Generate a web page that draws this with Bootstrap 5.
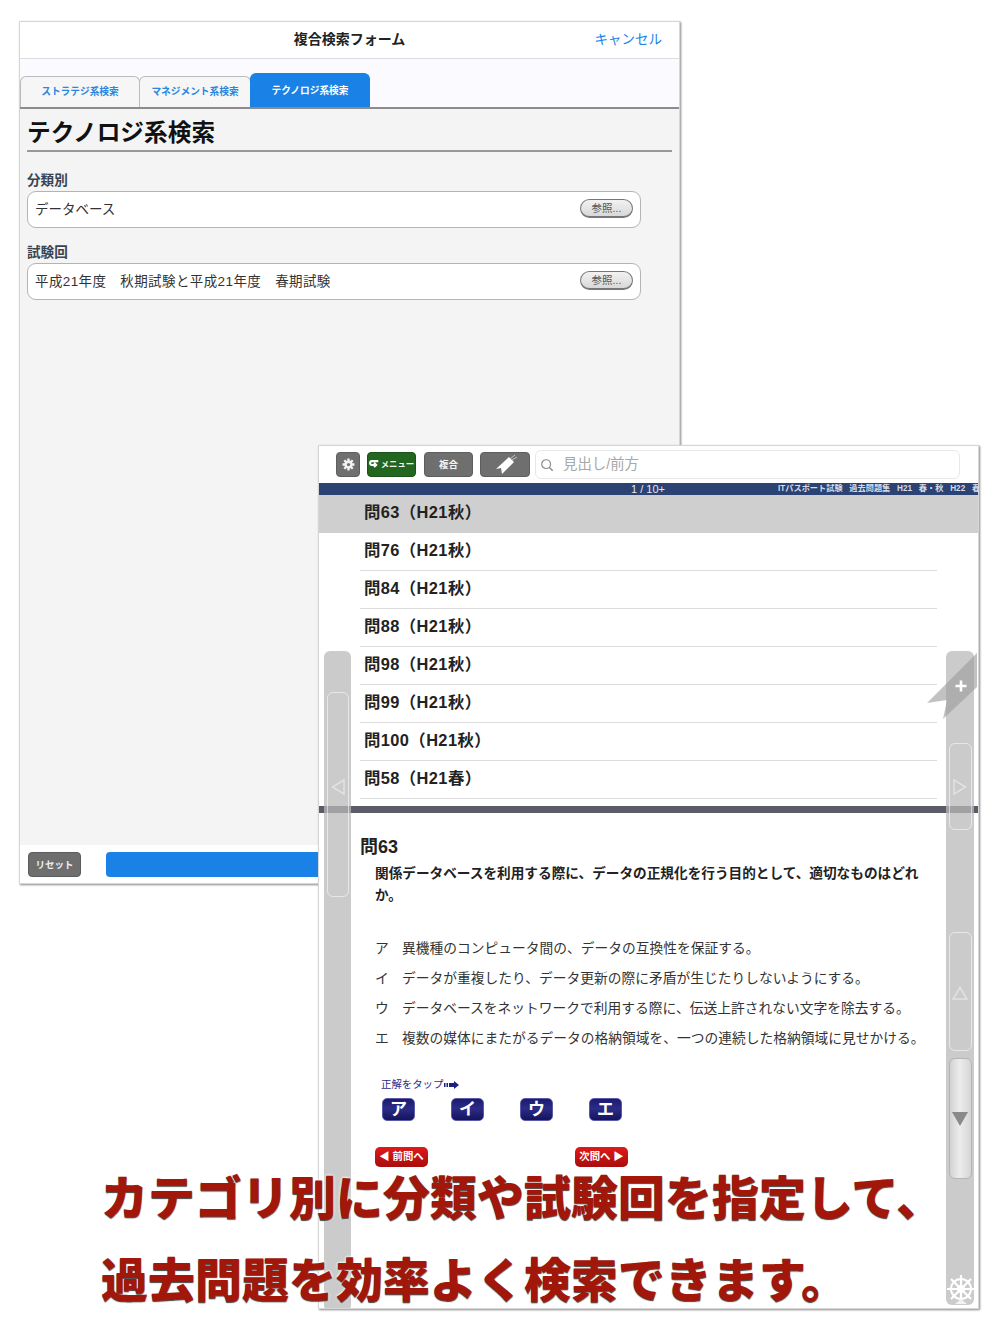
<!DOCTYPE html>
<html lang="ja">
<head>
<meta charset="utf-8">
<title>複合検索</title>
<link href="https://cdn.jsdelivr.net/npm/bootstrap@5.3.0/dist/css/bootstrap.min.css" rel="stylesheet">
<style>
html,body{margin:0;background:#fff;height:1334px;overflow:hidden}
body{font-family:"Liberation Sans","Noto Sans CJK JP",sans-serif;color:#222;position:relative;width:1000px}
.winbox{position:absolute;width:661px;background:#fff;border:1px solid #d6d6d6;box-shadow:1px 1px 2px #8a8a8a;overflow:hidden}
.win-a{left:19px;top:21px;height:863px;background:#f4f4f4}
.win-b{left:318px;top:445px;height:864px}
.titlebar{height:37px;background:#fff;border-bottom:1px solid #ddd;font-size:14px}
.titletext{font-weight:700;color:#222;left:0;right:0;top:7px}
.cancel{right:17px;top:8px;color:#1a82e6;text-decoration:none;font-size:13.5px}
.tabstrip{height:50px;background:#fafaff;border-bottom:2px solid #8c8c8c;align-items:flex-end}
.tabstrip .tabitem{width:120px;height:31px;background:#f6f6f6;border:1px solid #bbb;border-bottom:0;border-radius:6px 6px 0 0;font-size:9.7px;font-weight:700;color:#2a86e0;text-align:center;line-height:29px;padding:0;text-decoration:none}
.tabstrip .tabitem+.tabitem{width:112px;margin-left:-1px}
.tabstrip .tabon{width:120px!important;height:34px;background:#1a82e6;border-color:#1a82e6;color:#fff;line-height:33px}
.pagehead{font-size:23.7px;font-weight:700;color:#111;margin:9px 7px 0;padding-bottom:2px;border-bottom:2px solid #999;line-height:30px}
.fieldname{font-size:13.6px;font-weight:700;color:#3a4450;margin:20px 0 1px 7px;line-height:18px}
.fieldrow+.fieldname{margin-top:16px}
.fieldrow{width:614px;height:37px;margin-left:7px;background:#fff;border:1px solid #b4b4b4;border-radius:9px;padding:2px 7px 0;font-size:13.5px;color:#333}
.widetext{letter-spacing:.4px}
.browsebtn{width:53px;height:19px;padding:0;font-size:10.5px;line-height:16px;color:#555;background:linear-gradient(#f2f2f2,#d8d8d8);border:1px solid #777;border-bottom-width:2px;border-radius:10px;margin-top:-5px}
.footbar{height:38px;background:#fff;padding:7px 8px 6px}
.resetbtn{width:53px;height:25px;padding:0;font-size:9.5px;font-weight:700;line-height:23px;color:#eee;background:#6e6e6e;border:1px solid #5c5c5c;border-radius:4px}
.gobtn{height:25px;margin-left:25px;background:#1a82e6;border:0;border-radius:4px}
.toolbar{height:37px;padding:6px 18px 4px 17px;background:#fff;gap:7px}
.toolbtn{height:25px;padding:0;background:#6f6f6f;border:1px solid #5e5e5e;border-radius:4px;color:#f4f4f4;font-size:9.5px;font-weight:700;line-height:1;width:49px}
.toolbtn.gear{width:24px}
.toolbtn.menu{background:#23661f;border-color:#1d521a;font-size:8.4px;white-space:nowrap;gap:1px}
.toolbtn.mixed{margin-left:1px}
.toolbtn.tagged{width:50px}
.searchbox{height:29px;margin-top:-2px;border:1px solid #e8e8e8;border-radius:6px;font-size:14.4px;color:#a8a8a8;padding-left:4px;gap:9px;margin-left:-2px}
.statusbar{height:12px;background:#2b4272;color:#e4e8f0;position:relative;overflow:hidden;font-size:11px;line-height:12px}
.pagecount{left:312px;top:0;position:absolute}
.banner{left:459px;top:0;position:absolute;white-space:nowrap;font-size:8.2px;font-weight:700;color:#d6dbe6;word-spacing:4.5px}
.qlist{height:311px;border-radius:0}
.qlist .qitem{height:38px;margin-left:41px;margin-right:41px;padding:0 0 0 4px;border:0;border-bottom:1px solid #dcdcdc;border-radius:0;font-size:16.4px;font-weight:700;line-height:34px;letter-spacing:.4px;color:#222;background:transparent}
.qlist .qsel{margin:0;padding-left:45px;background:#cfcfcf;border-bottom:0}
.splitter{height:7px;background:#5c5c68}
.qarea{padding:24px 50px 0 41px}
.qtitle{font-size:18px;font-weight:700;line-height:20px;color:#222}
.qbody{font-size:13.65px;font-weight:700;line-height:22px;margin:6px 0 0 15px;color:#222}
.choices{margin:27px 0 0 15px;font-size:13.75px;line-height:30px;color:#333;list-style:none;padding:0}
.choices li{display:flex}
.choices b{font-weight:400;width:27px;flex:none}
.hintline{font-size:10.4px;color:#2a2a8c;margin:24px 0 0 21px;line-height:14px;gap:1px}
.answers{margin:6px 0 0 22px}
.answerbtn{width:33px;height:23px;padding:0;border:1px solid #5a5aa8;border-radius:5px;background:linear-gradient(#1a1a6e 0,#2c2c88 45%,#14145c 100%);color:#fff;font-size:17px;font-weight:700;line-height:20px;margin-right:36px}
.navrow{margin:26px 0 0 15px;width:253px}
.navbtn{width:53px;height:20px;padding:0;border:0;border-radius:5px;background:linear-gradient(#e01a1a,#a80c0c);color:#fff;font-size:10.4px;font-weight:700;line-height:20px}
.rail{position:absolute;background:rgba(185,185,185,.74);border-radius:6px}
.rail-l{left:5px;top:205px;width:27px;height:660px}
.rail-r{left:627px;top:205px;width:28px;height:654px}
.railcell{position:absolute;left:3px;width:23px;border:1px solid rgba(255,255,255,.55);border-radius:6px}
.rail-l .railcell{width:22px}
.railgrip{background:linear-gradient(90deg,#d2d2d2,#ececec 45%,#d6d6d6);border-color:#b4b4b4}
.railmark{position:absolute;left:0;right:0;margin:auto;display:block}
.ribbon{position:absolute;left:608px;top:207px}
.wheel{position:absolute;left:627px;top:827px}
.caption{position:absolute;left:101px;top:1154px;font-family:"Noto Sans CJK JP",sans-serif;font-size:47px;font-weight:900;line-height:82px;color:#a3170b;white-space:nowrap;text-shadow:0 1px 1px #444,0 0 3px #fff,0 0 3px #fff}
</style>
</head>
<body>

<section class="winbox win-a d-flex flex-column">
  <header class="titlebar position-relative flex-shrink-0">
    <div class="titletext position-absolute text-center">複合検索フォーム</div>
    <a class="cancel position-absolute" href="#">キャンセル</a>
  </header>
  <nav class="nav tabstrip flex-shrink-0">
    <a class="nav-link tabitem" href="#">ストラテジ系検索</a>
    <a class="nav-link tabitem" href="#">マネジメント系検索</a>
    <a class="nav-link tabitem tabon" href="#">テクノロジ系検索</a>
  </nav>
  <main class="flex-grow-1">
    <h1 class="pagehead">テクノロジ系検索</h1>
    <div class="fieldname">分類別</div>
    <div class="fieldrow d-flex align-items-center justify-content-between"><span>データベース</span><button class="btn browsebtn" type="button">参照...</button></div>
    <div class="fieldname">試験回</div>
    <div class="fieldrow d-flex align-items-center justify-content-between"><span class="widetext">平成21年度　秋期試験と平成21年度　春期試験</span><button class="btn browsebtn" type="button">参照...</button></div>
  </main>
  <footer class="footbar d-flex flex-shrink-0">
    <button class="btn resetbtn flex-shrink-0" type="button">リセット</button>
    <button class="btn gobtn flex-grow-1" type="button" aria-label="検索"></button>
  </footer>
</section>

<section class="winbox win-b">
  <div class="toolbar d-flex">
    <button class="btn toolbtn gear d-flex align-items-center justify-content-center flex-shrink-0" type="button" aria-label="設定">
      <svg width="13" height="13" viewBox="0 0 24 24"><g stroke="#f2f2f2" stroke-width="4.4"><path d="M12 1v22M1 12h22M4.2 4.2l15.6 15.6M19.800 4.200 4.200 19.800"/></g><circle cx="12" cy="12" r="7.500" fill="#f2f2f2"/><circle cx="12" cy="12" r="3" fill="#6f6f6f"/></svg>
    </button>
    <button class="btn toolbtn menu d-flex align-items-center justify-content-center flex-shrink-0" type="button">
      <svg width="11" height="11" viewBox="0 0 13 11" class="flex-shrink-0"><path d="M11 1.500H3.500a2 2 0 0 0 0 4.500H8M6 3.500 8.500 6 6 8.500" fill="none" stroke="#fff" stroke-width="2.400"/></svg><span>メニュー</span>
    </button>
    <button class="btn toolbtn mixed flex-shrink-0" type="button">複合</button>
    <button class="btn toolbtn tagged d-flex align-items-center justify-content-center flex-shrink-0" type="button" aria-label="しおり">
      <svg width="26" height="22" viewBox="0 0 26 22"><path d="M17 3 22 8 10 20 9 14 4 15Z" fill="#fff"/><path d="M18 5 23 1M20 6 25 3" stroke="#ddd" stroke-width=".8"/></svg>
    </button>
    <div class="searchbox d-flex align-items-center flex-grow-1">
      <svg width="14" height="14" viewBox="0 0 16 16" class="flex-shrink-0"><circle cx="7" cy="7" r="5" fill="none" stroke="#8c8c8c" stroke-width="1.400"/><path d="m10.500 10.500 4 4" stroke="#8c8c8c" stroke-width="1.600"/></svg>
      <span>見出し/前方</span>
    </div>
  </div>
  <div class="statusbar">
    <span class="pagecount">1 / 10+</span>
    <span class="banner">ITパスポート試験 過去問題集 H21 春・秋 H22 春</span>
  </div>
  <ul class="list-group qlist">
    <li class="list-group-item qitem qsel">問63（H21秋）</li>
    <li class="list-group-item qitem">問76（H21秋）</li>
    <li class="list-group-item qitem">問84（H21秋）</li>
    <li class="list-group-item qitem">問88（H21秋）</li>
    <li class="list-group-item qitem">問98（H21秋）</li>
    <li class="list-group-item qitem">問99（H21秋）</li>
    <li class="list-group-item qitem">問100（H21秋）</li>
    <li class="list-group-item qitem">問58（H21春）</li>
  </ul>
  <div class="splitter"></div>
  <div class="qarea">
    <div class="qtitle">問63</div>
    <p class="qbody">関係データベースを利用する際に、データの正規化を行う目的として、適切なものはどれか。</p>
    <ul class="choices">
      <li><b>ア</b><span>異機種のコンピュータ間の、データの互換性を保証する。</span></li>
      <li><b>イ</b><span>データが重複したり、データ更新の際に矛盾が生じたりしないようにする。</span></li>
      <li><b>ウ</b><span>データベースをネットワークで利用する際に、伝送上許されない文字を除去する。</span></li>
      <li><b>エ</b><span>複数の媒体にまたがるデータの格納領域を、一つの連続した格納領域に見せかける。</span></li>
    </ul>
    <div class="hintline d-flex align-items-center">正解をタップ
      <svg width="15" height="8" viewBox="0 0 15 8"><path d="M0 2h1.500v4H0zM2.500 2h1.500v4H2.500zM5 2h5V0l5 4-5 4V6H5z" fill="#1e1e86"/></svg>
    </div>
    <div class="answers d-flex">
      <button class="btn answerbtn" type="button">ア</button>
      <button class="btn answerbtn" type="button">イ</button>
      <button class="btn answerbtn" type="button">ウ</button>
      <button class="btn answerbtn" type="button">エ</button>
    </div>
    <div class="navrow d-flex justify-content-between">
      <button class="btn navbtn" type="button">◀ 前問へ</button>
      <button class="btn navbtn" type="button">次問へ ▶</button>
    </div>
  </div>

  <div class="rail rail-l">
    <div class="railcell" style="top:41px;height:205px"></div>
    <svg class="railmark" style="top:128px" width="14" height="16" viewBox="0 0 14 16"><path d="M13 1 1.500 8 13 15Z" fill="none" stroke="#e2e2e2" stroke-width="1.500"/></svg>
  </div>
  <div class="rail rail-r">
    <div class="railcell" style="top:92px;height:87px"></div>
    <svg class="railmark" style="top:128px" width="14" height="16" viewBox="0 0 14 16"><path d="M1 1 12.500 8 1 15Z" fill="none" stroke="#e2e2e2" stroke-width="1.500"/></svg>
    <div class="railcell" style="top:281px;height:119px"></div>
    <svg class="railmark" style="top:335px" width="16" height="14" viewBox="0 0 16 14"><path d="M8 1.500 15 13H1Z" fill="none" stroke="#e2e2e2" stroke-width="1.500"/></svg>
    <div class="railcell railgrip" style="top:407px;height:121px"></div>
    <svg class="railmark" style="top:461px" width="16" height="14" viewBox="0 0 16 14"><path d="M0 0H16L8 14Z" fill="#8a8a8a"/></svg>
  </div>
  <svg class="ribbon" width="52" height="68" viewBox="0 0 52 68" aria-hidden="true">
    <path d="M50 0V34L16 66 20 47 0 50Z" fill="#9c9c9c" fill-opacity=".62"/>
    <path d="M34 27.500V38.500M28.500 33H39.500" stroke="#fff" stroke-width="2.600"/>
  </svg>
  <svg class="wheel" width="30" height="32" viewBox="0 0 30 32" aria-hidden="true">
    <g fill="none" stroke="#fff" stroke-width="2">
      <circle cx="15" cy="16" r="10"/>
      <circle cx="15" cy="16" r="3" fill="#fff"/>
      <path d="M15 2V30M1 16H29M5 6 25 26M25 6 5 26" stroke-width="2.200"/>
    </g>
    <path d="M15 26 21 31H9Z" fill="#f2f2f2"/>
  </svg>
</section>

<div class="caption">カテゴリ別に分類や試験回を指定して、<br>過去問題を効率よく検索できます。</div>

</body>
</html>
